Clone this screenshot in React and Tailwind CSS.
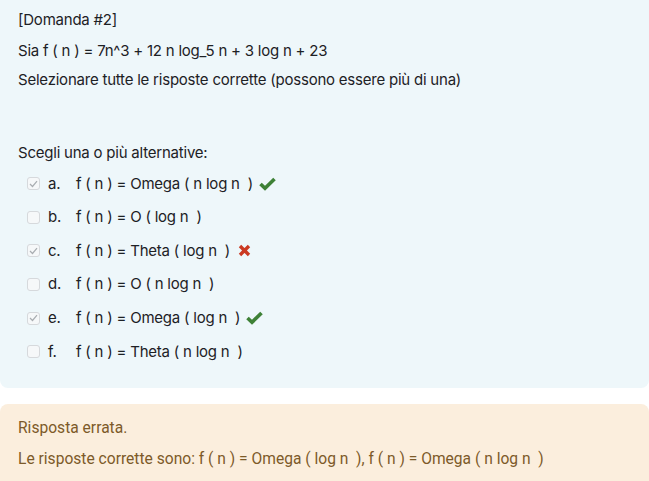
import React from "react";

const options = [
  { letter: "a.", text: "f ( n ) = Omega ( n log n  )", checked: true, mark: "ok" },
  { letter: "b.", text: "f ( n ) = O ( log n  )", checked: false },
  { letter: "c.", text: "f ( n ) = Theta ( log n  )", checked: true, mark: "bad" },
  { letter: "d.", text: "f ( n ) = O ( n log n  )", checked: false },
  { letter: "e.", text: "f ( n ) = Omega ( log n  )", checked: true, mark: "ok" },
  { letter: "f.", text: "f ( n ) = Theta ( n log n  )", checked: false },
];

const Tick = () => (
  <svg width="17" height="14" viewBox="0 0 17 14" className="ml-1.5">
    <path d="M1.5 7 L6 11.3 L15.5 2" fill="none" stroke="#3e8136" strokeWidth="3.6" strokeLinejoin="miter" />
  </svg>
);

const Cross = () => (
  <svg width="13" height="13" viewBox="0 0 13 13" className="ml-2">
    <path d="M2 2 L11 11 M11 2 L2 11" stroke="#cb3a22" strokeWidth="3.4" strokeLinecap="butt" />
  </svg>
);

const Box = ({ checked }) => (
  <span className="w-[13px] h-[13px] rounded-[3px] border border-[#d6d9dc] bg-[#f6f8f9] flex items-center justify-center">
    {checked && (
      <svg width="9" height="8" viewBox="0 0 9 8">
        <path d="M1 4 L3.5 6.5 L8 1.2" fill="none" stroke="#a9adb1" strokeWidth="1.2" />
      </svg>
    )}
  </span>
);

export default function App() {
  return (
    <div className="w-[649px] h-[481px] overflow-hidden bg-white" style={{ fontFamily: "Inter, 'Noto Sans', sans-serif" }}>
      <div className="bg-[#eef7fa] rounded-b-lg px-[18px] pt-[9px] pb-[19px] text-[#1d2125] text-[15px] tracking-[-0.22px]">
        <p className="leading-[22px]">[Domanda #2]</p>
        <p className="leading-[22px] mt-[9px]">Sia f ( n ) = 7n^3 + 12 n log_5 n + 3 log n + 23</p>
        <p className="leading-[22px] mt-[7px]">Selezionare tutte le risposte corrette (possono essere più di una)</p>
        <p className="leading-[22px] mt-[51px]">Scegli una o più alternative:</p>
        <div className="mt-[3px] pl-[9px] flex flex-col">
          {options.map((o) => (
            <div key={o.letter} className="h-[33.6px] flex items-center">
              <Box checked={o.checked} />
              <span className="ml-[8px] w-[28px]">{o.letter}</span>
              <span className="whitespace-pre">{o.text}</span>
              {o.mark === "ok" && <Tick />}
              {o.mark === "bad" && <Cross />}
            </div>
          ))}
        </div>
      </div>
      <div className="mt-[16px] bg-[#fbeedd] rounded-t-lg px-[18px] pt-[13px] pb-[20px] text-[#7d5a29] text-[15.6px]" style={{ fontFamily: "Roboto, sans-serif" }}>
        <p className="leading-[22px]">Risposta errata.</p>
        <p className="leading-[22px] mt-[9px] whitespace-pre">Le risposte corrette sono: f ( n ) = Omega ( log n  ), f ( n ) = Omega ( n log n  )</p>
      </div>
    </div>
  );
}
